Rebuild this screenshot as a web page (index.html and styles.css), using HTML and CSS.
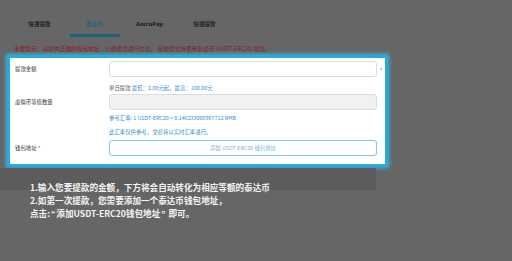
FILE: index.html
```html
<!DOCTYPE html>
<html lang="zh">
<head>
<meta charset="utf-8">
<link rel="stylesheet" href="styles.css">
</head>
<body>
<div class="page">
  <div class="tabs">
    <div class="tab">快捷提款</div>
    <div class="tab active">泰达币</div>
    <div class="tab en">AstroPay</div>
    <div class="tab">快捷提款</div>
  </div>
  <div class="notice">重要提示：请提供正确的钱包地址，以便成功进行交易。 目前仅支持使用泰达币 (USDT-ERC20) 提款。</div>
  <div class="card">
    <div class="row">
      <div class="label">提款金额</div>
      <div class="input"></div>
      <div class="star">*</div>
    </div>
    <div class="hint first"><span class="grey">单日提款</span> 最低：2.00元起，最高：100.00元</div>
    <div class="row r2">
      <div class="label">虚拟币等值数量</div>
      <div class="input disabled"></div>
    </div>
    <div class="hint second">参考汇率: 1 USDT-ERC20 = 0.146233006967712 RMB</div>
    <div class="hint third">此汇率仅供参考，交易将以实时汇率进行。</div>
    <div class="row r3">
      <div class="label">钱包地址 *</div>
      <div class="btn">添加 USDT-ERC20 钱包地址</div>
    </div>
  </div>
  <div class="band"></div>
  <div class="guide">
    <p>1.输入您要提款的金额，下方将会自动转化为相应等额的泰达币</p>
    <p>2.如第一次提款，您需要添加一个泰达币钱包地址，</p>
    <p>点击:<span class="q">“</span>添加USDT-ERC20钱包地址<span class="q">”</span> 即可。</p>
  </div>
</div>
</body>
</html>
```
FILE: styles.css
```css
html, body {
  margin: 0;
  padding: 0;
  background: #666666;
  width: 512px;
  height: 261px;
  overflow: hidden;
}
.page {
  position: relative;
  width: 512px;
  height: 261px;
  font-family: "Noto Sans CJK SC", "Noto Sans", sans-serif;
}
.tabs {
  display: flex;
  padding: 18px 0 0 12px;
  height: 22px;
}
.tab {
  width: 55px;
  text-align: center;
  font-size: 5.6px;
  font-weight: 500;
  line-height: 12px;
  color: #161616;
}
.tab.en {
  font-family: "Open Sans", "Noto Sans", sans-serif;
  font-weight: 700;
  font-size: 6px;
}
.tab.active {
  color: #1f5f78;
}
.tab.active::after {
  content: "";
  display: block;
  height: 3px;
  margin: 4px 2.5px 0;
  background: #1c6279;
}
.notice {
  margin: 4px 0 0 14px;
  font-size: 5.7px;
  line-height: 10px;
  height: 11px;
  color: #8a1c1f;
}
.card {
  margin-left: 7px;
  width: 375px;
  height: 103px;
  border: 3px solid #29a9dc;
  background: #ffffff;
  box-shadow: 0 0 4px 1px #35b6e6;
  padding: 3px 0 0 0;
  box-sizing: content-box;
}
.row {
  display: flex;
  align-items: center;
  height: 16px;
}
.r2 { margin-top: 2px; }
.r3 { margin-top: 4px; }
.label {
  width: 94px;
  padding-left: 5px;
  font-size: 5.4px;
  color: #333333;
}
.input {
  width: 266px;
  height: 14px;
  border: 1px solid #dcdcdc;
  border-radius: 3px;
  background: #ffffff;
}
.input.disabled {
  background: #f1f1f1;
}
.star {
  margin-left: 3px;
  font-size: 5px;
  color: #555555;
  line-height: 5px;
}
.hint {
  margin-left: 99px;
  font-size: 5.4px;
  line-height: 8px;
  height: 8px;
  color: #3b8fd0;
}
.hint.first { margin-top: 7px; }
.hint.second { margin-top: 4px; }
.hint.third { margin-top: 6px; }
.grey { color: #555555; }
.btn {
  width: 266px;
  height: 14px;
  border: 1px solid #84c4e8;
  border-radius: 3px;
  text-align: center;
  font-size: 5.4px;
  line-height: 14px;
  color: #7fb6e0;
}
.band {
  margin-top: 1px;
  width: 376px;
  height: 22px;
  background: #5c5c5c;
}
.guide {
  position: absolute;
  left: 30px;
  top: 180.5px;
  font-size: 8.6px;
  font-weight: 700;
  line-height: 13px;
  color: #f4f4f4;
}
.guide p {
  margin: 0;
}
.q {
  font-family: "Liberation Sans", sans-serif;
  padding: 0 1px;
}
```
